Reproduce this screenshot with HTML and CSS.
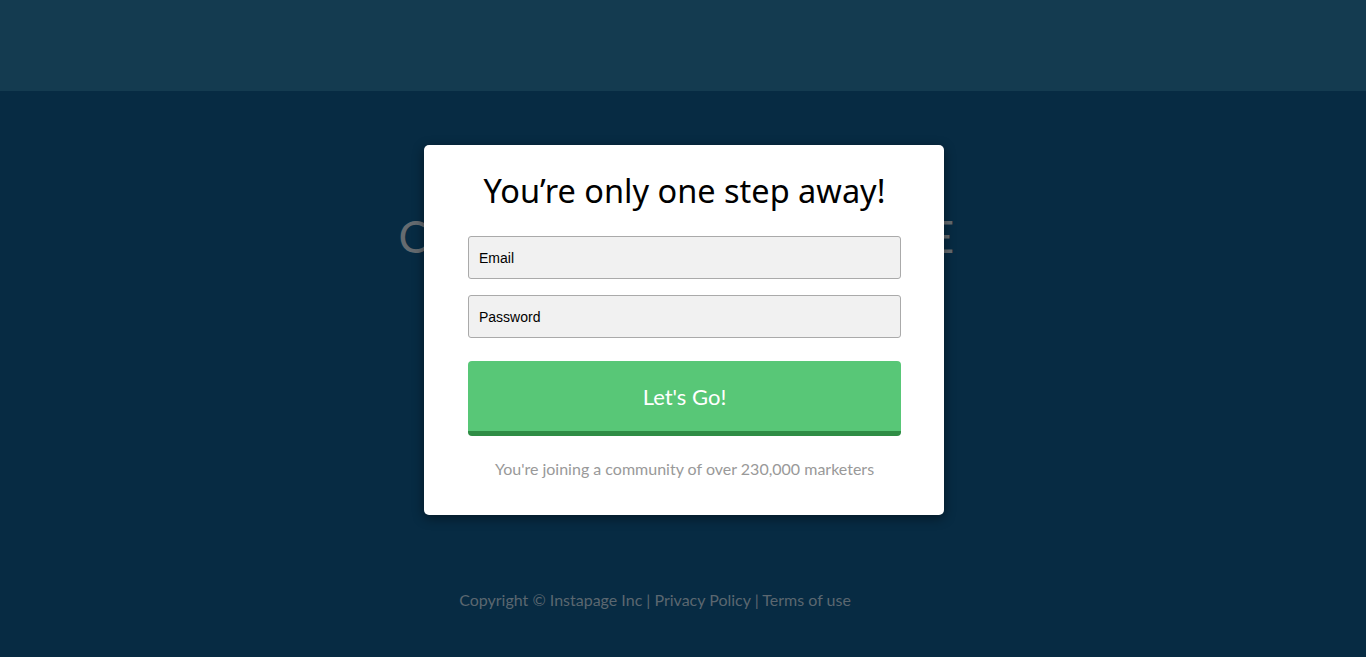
FILE: index.html
```html
<!DOCTYPE html>
<html>
<head>
<meta charset="utf-8">
<link rel="stylesheet" href="styles.css">
</head>
<body>
<header class="topbar"></header>
<main class="page">
  <h1 class="hero-title">CREATE YOUR FREE PAGE</h1>
  <footer class="footer">Copyright © Instapage Inc | Privacy Policy | Terms of use</footer>
  <div class="modal">
    <h2 class="modal-title">You’re only one step away!</h2>
    <div class="field">Email</div>
    <div class="field">Password</div>
    <button class="go-btn">Let's Go!</button>
    <p class="note">You're joining a community of over 230,000 marketers</p>
  </div>
</main>
</body>
</html>
```
FILE: styles.css
```css
html, body {
  margin: 0;
  padding: 0;
  height: 100%;
}
body {
  background: #072b43;
  font-family: "Lato", "Liberation Sans", sans-serif;
  overflow: hidden;
}
.topbar {
  height: 91px;
  background: #143b50;
}
.page {
  position: relative;
  height: 566px;
  display: flex;
  flex-direction: column;
  align-items: center;
}
.hero-title {
  margin: 120px 0 0 0;
  padding-right: 12px;
  font-family: "Lato", sans-serif;
  font-weight: 400;
  font-size: 44px;
  letter-spacing: 1.4px;
  color: #656b70;
  line-height: 50px;
}
.footer {
  margin-top: auto;
  margin-bottom: 48px;
  margin-right: 56px;
  font-family: "Lato", sans-serif;
  font-size: 16px;
  color: #5b6770;
}
.modal {
  position: absolute;
  left: 424px;
  top: 54px;
  width: 520px;
  height: 370px;
  box-sizing: border-box;
  padding: 25px 43px 0 44px;
  background: #fff;
  border-radius: 5px;
  box-shadow: 0 3px 12px rgba(0, 0, 0, 0.45);
  display: flex;
  flex-direction: column;
}
.modal-title {
  margin: 0 0 24px 0;
  text-align: center;
  font-family: "Noto Sans", sans-serif;
  font-weight: 400;
  font-size: 32.5px;
  line-height: 42px;
  color: #000;
}
.field {
  height: 43px;
  box-sizing: border-box;
  border: 1px solid #aaa;
  border-radius: 3px;
  background: #f1f1f1;
  padding: 0 10px;
  display: flex;
  align-items: center;
  font-family: "Liberation Sans", Arial, sans-serif;
  font-size: 14px;
  color: #000;
  margin-bottom: 16px;
}
.field + .field {
  margin-bottom: 23px;
}
.go-btn {
  height: 75px;
  border: none;
  border-bottom: 5px solid #2f8d45;
  border-radius: 4px;
  background: #58c777;
  color: #fff;
  font-family: "Lato", sans-serif;
  font-size: 22px;
  padding: 0;
}
.note {
  margin: 23px 0 0 0;
  text-align: center;
  font-family: "Lato", sans-serif;
  font-size: 16px;
  color: #999;
}
```
